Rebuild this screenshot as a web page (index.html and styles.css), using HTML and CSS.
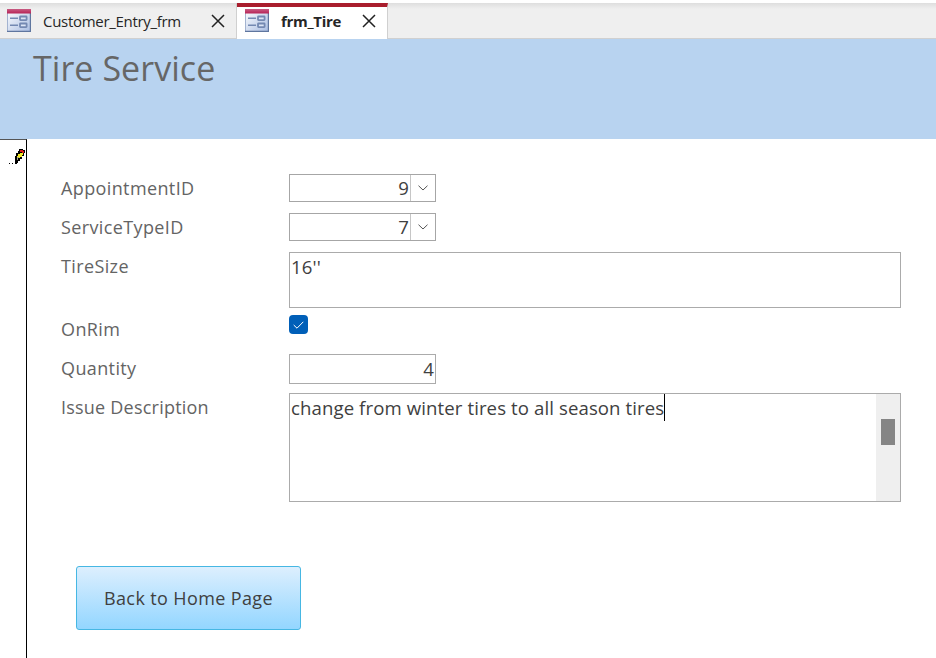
FILE: index.html
```html
<!DOCTYPE html>
<html lang="en">
<head>
<meta charset="utf-8">
<title>frm_Tire</title>
<link rel="stylesheet" href="styles.css">
</head>
<body>
<svg width="0" height="0" class="defs" aria-hidden="true">
  <defs>
    <linearGradient id="paper" x1="0" y1="0" x2="1" y2="1"><stop offset="0" stop-color="#fff"/><stop offset="1" stop-color="#a9bde2"/></linearGradient>
    <linearGradient id="bar" x1="0" y1="0" x2="0" y2="1"><stop offset="0" stop-color="#c85c83"/><stop offset="1" stop-color="#b72355"/></linearGradient>
    <symbol id="form-icon" viewBox="0 0 24 23">
      <rect x=".5" y=".5" width="23" height="22" fill="url(#paper)" stroke="#a3b3d0"/>
      <path d="M0 22.3H24M23.4 4V23" stroke="#5f769f" stroke-width="1.2"/>
      <rect width="24" height="4.5" fill="url(#bar)"/>
      <path d="M3 9.3h8M3 16.3h8" stroke="#7489b2" stroke-width="1.6"/>
      <rect x="13" y="7.5" width="6.6" height="3.6" rx=".5" fill="#dce5f5" stroke="#7489b2" stroke-width="1.8"/>
      <rect x="13" y="14.5" width="6.6" height="3.6" rx=".5" fill="#dce5f5" stroke="#7489b2" stroke-width="1.8"/>
    </symbol>
  </defs>
</svg>
<nav class="tabs">
  <div class="tab">
    <svg class="form-icon"><use href="#form-icon"/></svg>
    <span class="tab-name">Customer_Entry_frm</span>
    <svg class="close" viewBox="0 0 14 14"><path d="M1 1l12 12M13 1L1 13"/></svg>
  </div>
  <div class="tab active">
    <svg class="form-icon"><use href="#form-icon"/></svg>
    <span class="tab-name">frm_Tire</span>
    <svg class="close" viewBox="0 0 14 14"><path d="M1 1l12 12M13 1L1 13"/></svg>
  </div>
</nav>
<header class="form-header"><h1>Tire Service</h1></header>
<main class="record">
  <aside class="selector">
    <svg class="pencil" viewBox="0 0 17 18" shape-rendering="crispEdges">
      <path d="M1 15h1v1H1zM4 15h1v1H4zM7 8h1V5h2V3h1V1h4v1h2v3h-1v3h-2v3h-2v2h-2v2H9v1H7z" fill="#000"/>
      <path d="M9 8h1V6h2V5h3v2h-1v2h-2v1h-2V9H9z" fill="#f4ec26"/>
      <path d="M12 2h3v1h1v2h-2V4h-2z" fill="#d91c18"/>
      <path d="M9 9h2v1h-1v2H9z" fill="#aaa98c"/>
    </svg>
  </aside>
  <form class="fields">
    <div class="row"><label>AppointmentID</label><div class="combo"><span class="value">9</span><span class="drop"><svg viewBox="0 0 10 6"><path d="M.5 .7L5 5L9.5 .7"/></svg></span></div></div>
    <div class="row"><label>ServiceTypeID</label><div class="combo"><span class="value">7</span><span class="drop"><svg viewBox="0 0 10 6"><path d="M.5 .7L5 5L9.5 .7"/></svg></span></div></div>
    <div class="row size"><label>TireSize</label><div class="box">16''</div></div>
    <div class="row rim"><label>OnRim</label><span class="check"><svg viewBox="0 0 11 8"><path d="M.7 4L4 7.2L10.3 .8"/></svg></span></div>
    <div class="row quantity"><label>Quantity</label><div class="box number">4</div></div>
    <div class="row issue"><label>Issue Description</label><div class="box memo"><span class="memo-text">change from winter tires to all season tires</span><i class="caret"></i><div class="scroll"><div class="thumb"></div></div></div></div>
    <button type="button" class="home">Back to Home Page</button>
  </form>
</main>
</body>
</html>
```
FILE: styles.css
```css
* { box-sizing: border-box; }
body {
  margin: 0;
  height: 658px;
  overflow: hidden;
  display: flex;
  flex-direction: column;
  background: #fff;
  color: #404040;
  font: 18px/26px "Open Sans", "Noto Sans", sans-serif;
}
.defs { position: absolute; }
.tabs {
  display: flex;
  height: 36px;
  margin-top: 3px;
  background: linear-gradient(#dedede, #efefef 6px);
  border-bottom: 1px solid #d0d0d0;
}
.tab {
  display: flex;
  align-items: center;
  width: 237px;
  height: 35px;
  padding: 0 11px 0 7px;
  border-right: 1px solid #d0d0d0;
  color: #262626;
  font-size: 15px;
}
.tab.active {
  width: 151px;
  height: 36px;
  padding: 0 11px 5px 8px;
  background: #fff;
  border-top: 4px solid #a91d2d;
  font-weight: 700;
}
.form-icon { width: 24px; height: 23px; flex: none; }
.tab-name { margin-left: 12px; white-space: nowrap; letter-spacing: -.3px; }
.close { width: 14px; height: 14px; margin-left: auto; flex: none; fill: none; stroke: #222; stroke-width: 1.5; }
.form-header {
  height: 100px;
  padding: 5px 0 0 33px;
  background: #b8d3f0;
}
h1 { margin: 0; color: #666; font-size: 34px; line-height: 48px; font-weight: 400; letter-spacing: .05px; }
.record { flex: 1; display: flex; }
.selector { width: 27px; border-top: 1px solid #555; border-right: 1px solid #000; padding: 8px 0 0 8px; }
.pencil { display: block; width: 17px; height: 18px; }
.fields { flex: 1; padding: 35px 35px 0 34px; letter-spacing: .38px; }
.row { display: grid; grid-template-columns: 228px 1fr; grid-template-rows: 100%; height: 28px; margin-bottom: 11px; align-items: start; }
label { color: #646464; padding-top: 1px; white-space: nowrap; }
.issue label { letter-spacing: .22px; }
.combo { display: flex; width: 147px; height: 28px; border: 1px solid #a6a6a6; }
.combo, .box { font-size: 18.6px; letter-spacing: .1px; }
.value { flex: 1; text-align: right; padding-right: 1px; }
.drop { width: 25px; display: grid; place-items: center; border-left: 1px solid #c6c6c6; }
.drop svg { width: 10px; height: 6px; fill: none; stroke: #555; }
.box { border: 1px solid #ababab; height: 100%; padding: 1px; }
.size { height: 56px; margin-bottom: 7px; }
.rim { height: 20px; margin-bottom: 19px; }
.check { width: 19px; height: 19px; display: grid; place-items: center; border-radius: 4px; background: #005fb8; }
.check svg { width: 11px; height: 8px; fill: none; stroke: #fff; }
.quantity { height: 30px; margin-bottom: 9px; }
.number { width: 147px; text-align: right; }
.issue { height: 109px; margin-bottom: 64px; }
.memo { display: flex; padding: 0 0 0 1px; }
.memo-text { padding-top: 1px; white-space: nowrap; }
.caret { width: 1px; height: 27px; background: #000; }
.scroll { width: 24px; margin-left: auto; padding: 25px 5px 0; background: #efefef; }
.thumb { height: 26px; background: #858585; }
.home {
  display: block;
  width: 225px;
  height: 64px;
  margin-left: 15px;
  padding: 0 0 1px;
  border: 1px solid #46b7e3;
  border-radius: 3px;
  background: linear-gradient(#ddeffe, #93d6ff);
  color: #404040;
  font: inherit;
  letter-spacing: inherit;
}
```
